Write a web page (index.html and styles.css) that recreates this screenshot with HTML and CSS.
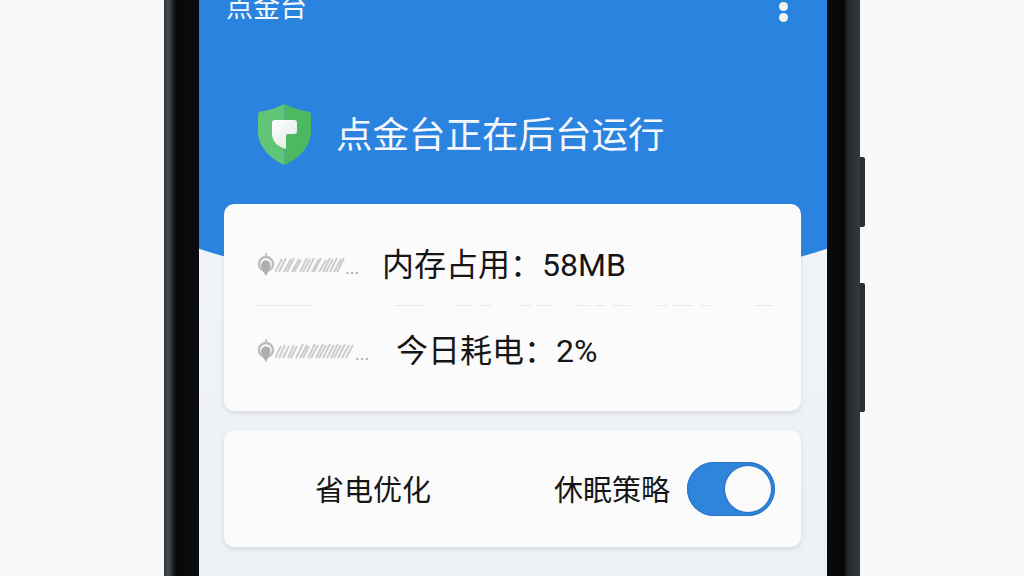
FILE: index.html
```html
<!DOCTYPE html>
<html lang="zh-CN">

<head>
    <meta charset="UTF-8">
    <title>点金台</title>
    <link rel="stylesheet" href="styles.css">
</head>

<body>
    <div class="phone">
        <span class="side-btn side-btn-power"></span>
        <span class="side-btn side-btn-volume"></span>
        <div class="screen">
            <div class="header">
                <div class="topbar">
                    <span class="app-name">点金台</span>
                    <span class="more"><i></i><i></i></span>
                </div>
                <div class="status">
                    <svg class="shield" viewBox="0 0 53 61">
                        <defs>
                            <linearGradient id="paper" x1="0" y1="0" x2="1" y2="1">
                                <stop offset="0" stop-color="#ffffff" />
                                <stop offset="1" stop-color="#dfe9e2" />
                            </linearGradient>
                        </defs>
                        <path d="M26.5 0C18 4 10 6.500 3 7.500 1 7.800 0 9 0 11V27C0 43 12 54.500 26.500 61Z" fill="#62c476" />
                        <path d="M26.5 0C35 4 43 6.500 50 7.500 52 7.800 53 9 53 11V27C53 43 41 54.500 26.500 61Z" fill="#4db862" />
                        <path d="M17 16H36a3 3 0 0 1 3 3V27a3 3 0 0 1-3 3H30a2 2 0 0 0-2 2V45C20 43 14 37 14 30V19a3 3 0 0 1 3-3Z" fill="url(#paper)" />
                    </svg>
                    <h1 class="status-text">点金台正在后台运行</h1>
                </div>
            </div>

            <div class="content">
                <div class="card card-info">
                    <div class="row row-first">
                        <svg class="pin" viewBox="0 0 18 24">
                            <path d="M9 0V5" stroke="#b5b5b5" stroke-width="1.500" />
                            <circle cx="9" cy="11" r="7" fill="none" stroke="#bdbdbd" stroke-width="2.500" />
                            <path d="M4 13C4 9 8 6 11 8 14 9 14 13 12 17L9 23 6 18Z" fill="#aeaeae" />
                        </svg>
                        <svg class="scribble scribble-short" viewBox="0 0 70 16">
                            <path d="M0 15L7 2M4 15L11 1M9 15L16 2M12 15L19 1M17 15L24 2M19 15L26 3M25 15L32 1M28 15L35 2M32 15L39 1M37 15L44 2M39 15L46 1M44 15L51 3M48 15L55 1M51 15L58 2M55 15L62 1M59 15L66 2M62 15L69 1" />
                        </svg>
                        <span class="dots">...</span>
                        <span class="stat stat-memory">内存占用：58MB</span>
                    </div>
                    <svg class="divider" viewBox="0 0 520 1">
                        <path d="M0 .5H57M141 .5H170M203 .5H218M226 .5H237M266 .5H278M282 .5H299M322 .5H336M341 .5H351M359 .5H376M404 .5H414M419 .5H439M446 .5H456M501 .5H519" />
                    </svg>
                    <div class="row row-second">
                        <svg class="pin" viewBox="0 0 18 24">
                            <path d="M9 0V5" stroke="#b5b5b5" stroke-width="1.500" />
                            <circle cx="9" cy="11" r="7" fill="none" stroke="#bdbdbd" stroke-width="2.500" />
                            <path d="M4 13C4 9 8 6 11 8 14 9 14 13 12 17L9 23 6 18Z" fill="#aeaeae" />
                        </svg>
                        <svg class="scribble scribble-long" viewBox="0 0 80 16">
                            <path d="M0 15L6 3M4 15L10 2M8 15L14 3M13 15L19 2M16 15L22 3M21 15L28 1M25 15L32 2M28 15L34 3M33 15L40 1M36 15L43 2M41 15L48 1M44 15L51 2M48 15L55 1M52 15L59 2M56 15L63 1M59 15L66 2M63 15L70 1M67 15L74 2M71 15L78 2" />
                        </svg>
                        <span class="dots">...</span>
                        <span class="stat stat-power">今日耗电：2%</span>
                    </div>
                </div>

                <div class="card card-switch">
                    <span class="label">省电优化</span>
                    <span class="switch-group">
                        <span class="label">休眠策略</span>
                        <span class="toggle"><span class="knob"></span></span>
                    </span>
                </div>
            </div>
        </div>
    </div>
</body>

</html>
```

FILE: styles.css
```css
* {
    margin: 0;
    padding: 0;
    box-sizing: border-box;
}

html,
body {
    height: 576px;
    overflow: hidden;
}

body {
    display: flex;
    justify-content: center;
    background-color: #f7f9fb;
    font-family: Roboto, "Noto Sans CJK SC", sans-serif;
}

.phone {
    position: relative;
    width: 696px;
    height: 576px;
    padding: 0 33px 0 35px;
    background: linear-gradient(90deg, #2f3235 0, #4a4d50 4px, #34373a 7px, #17191b 10px, #060708 13px, #0b0c0d 35px, #0b0c0d 661px, #050606 680px, #222426 683px, #2f3235 690px, #36393c 696px);
}

.side-btn {
    position: absolute;
    right: -5px;
    width: 5px;
    background-color: #2c2e31;
    border-radius: 0 2px 2px 0;
}

.side-btn-power {
    top: 157px;
    height: 70px;
}

.side-btn-volume {
    top: 283px;
    height: 129px;
}

.screen {
    height: 576px;
    overflow: hidden;
    background: linear-gradient(180deg, #f3f5f8 0, #eef1f4 100%);
}

.header {
    display: flow-root;
    height: 294px;
    margin-bottom: -90px;
    padding: 0 27px;
    background-color: #2a83df;
    clip-path: ellipse(700px 455px at 50% -158px);
    color: #f4f8fc;
}

.topbar {
    display: flex;
    justify-content: space-between;
    align-items: center;
    height: 40px;
    margin-top: -12px;
}

.app-name {
    font-size: 27px;
    line-height: 40px;
}

.more {
    display: flex;
    flex-direction: column;
    gap: 2px;
    margin-top: 7px;
    padding-right: 12px;
}

.more i {
    display: block;
    width: 9px;
    height: 9px;
    border-radius: 50%;
    background-color: #f1f4f2;
}

.status {
    display: flex;
    align-items: center;
    gap: 25px;
    margin-top: 75px;
    padding-left: 32px;
}

.shield {
    width: 53px;
    height: 61px;
}

.status-text {
    padding-top: 2px;
    font-size: 36.500px;
    font-weight: 400;
    line-height: 61px;
}

.content {
    position: relative;
    padding: 0 26px 0 25px;
    color: #161616;
}

.card {
    background-color: #fbfbfb;
    border-radius: 10px;
    box-shadow: 0 2px 5px rgba(120, 130, 140, 0.22);
}

.card-info {
    height: 207px;
    padding: 21px 0 0 33px;
}

.row {
    display: flex;
    align-items: center;
}

.row-first {
    height: 80px;
}

.row-second {
    height: 90px;
}

.pin {
    width: 18px;
    height: 24px;
    flex: none;
}

.scribble {
    height: 16px;
    flex: none;
    fill: none;
    stroke: #cdcdcd;
    stroke-width: 2;
    filter: blur(0.6px);
}

.scribble-short {
    width: 70px;
}

.scribble-long {
    width: 80px;
}

.dots {
    width: 13px;
    margin-top: 4px;
    color: #a8a8a8;
    font-size: 18px;
    flex: none;
}

.stat {
    margin-bottom: 6px;
    font-size: 32px;
}

.stat-memory {
    margin-left: 24px;
}

.stat-power {
    margin-left: 28px;
}

.divider {
    display: block;
    width: 520px;
    height: 1px;
    margin-left: -3px;
    fill: none;
    stroke: #e6e9eb;
}

.card-switch {
    display: flex;
    justify-content: space-between;
    align-items: center;
    height: 117px;
    margin-top: 19px;
    padding: 0 26px 0 91px;
}

.label {
    margin-bottom: 2px;
    font-size: 29px;
}

.switch-group {
    display: flex;
    align-items: center;
    gap: 17px;
}

.toggle {
    display: flex;
    justify-content: flex-end;
    align-items: center;
    width: 88px;
    height: 54px;
    padding-right: 4px;
    background-color: #2f84dc;
    border-radius: 27px;
    box-shadow: inset 0 0 0 1px #2a76c4;
}

.knob {
    width: 46px;
    height: 46px;
    background-color: #fafafa;
    border-radius: 50%;
    box-shadow: 0 0 2px rgba(20, 70, 120, 0.7);
}
```
